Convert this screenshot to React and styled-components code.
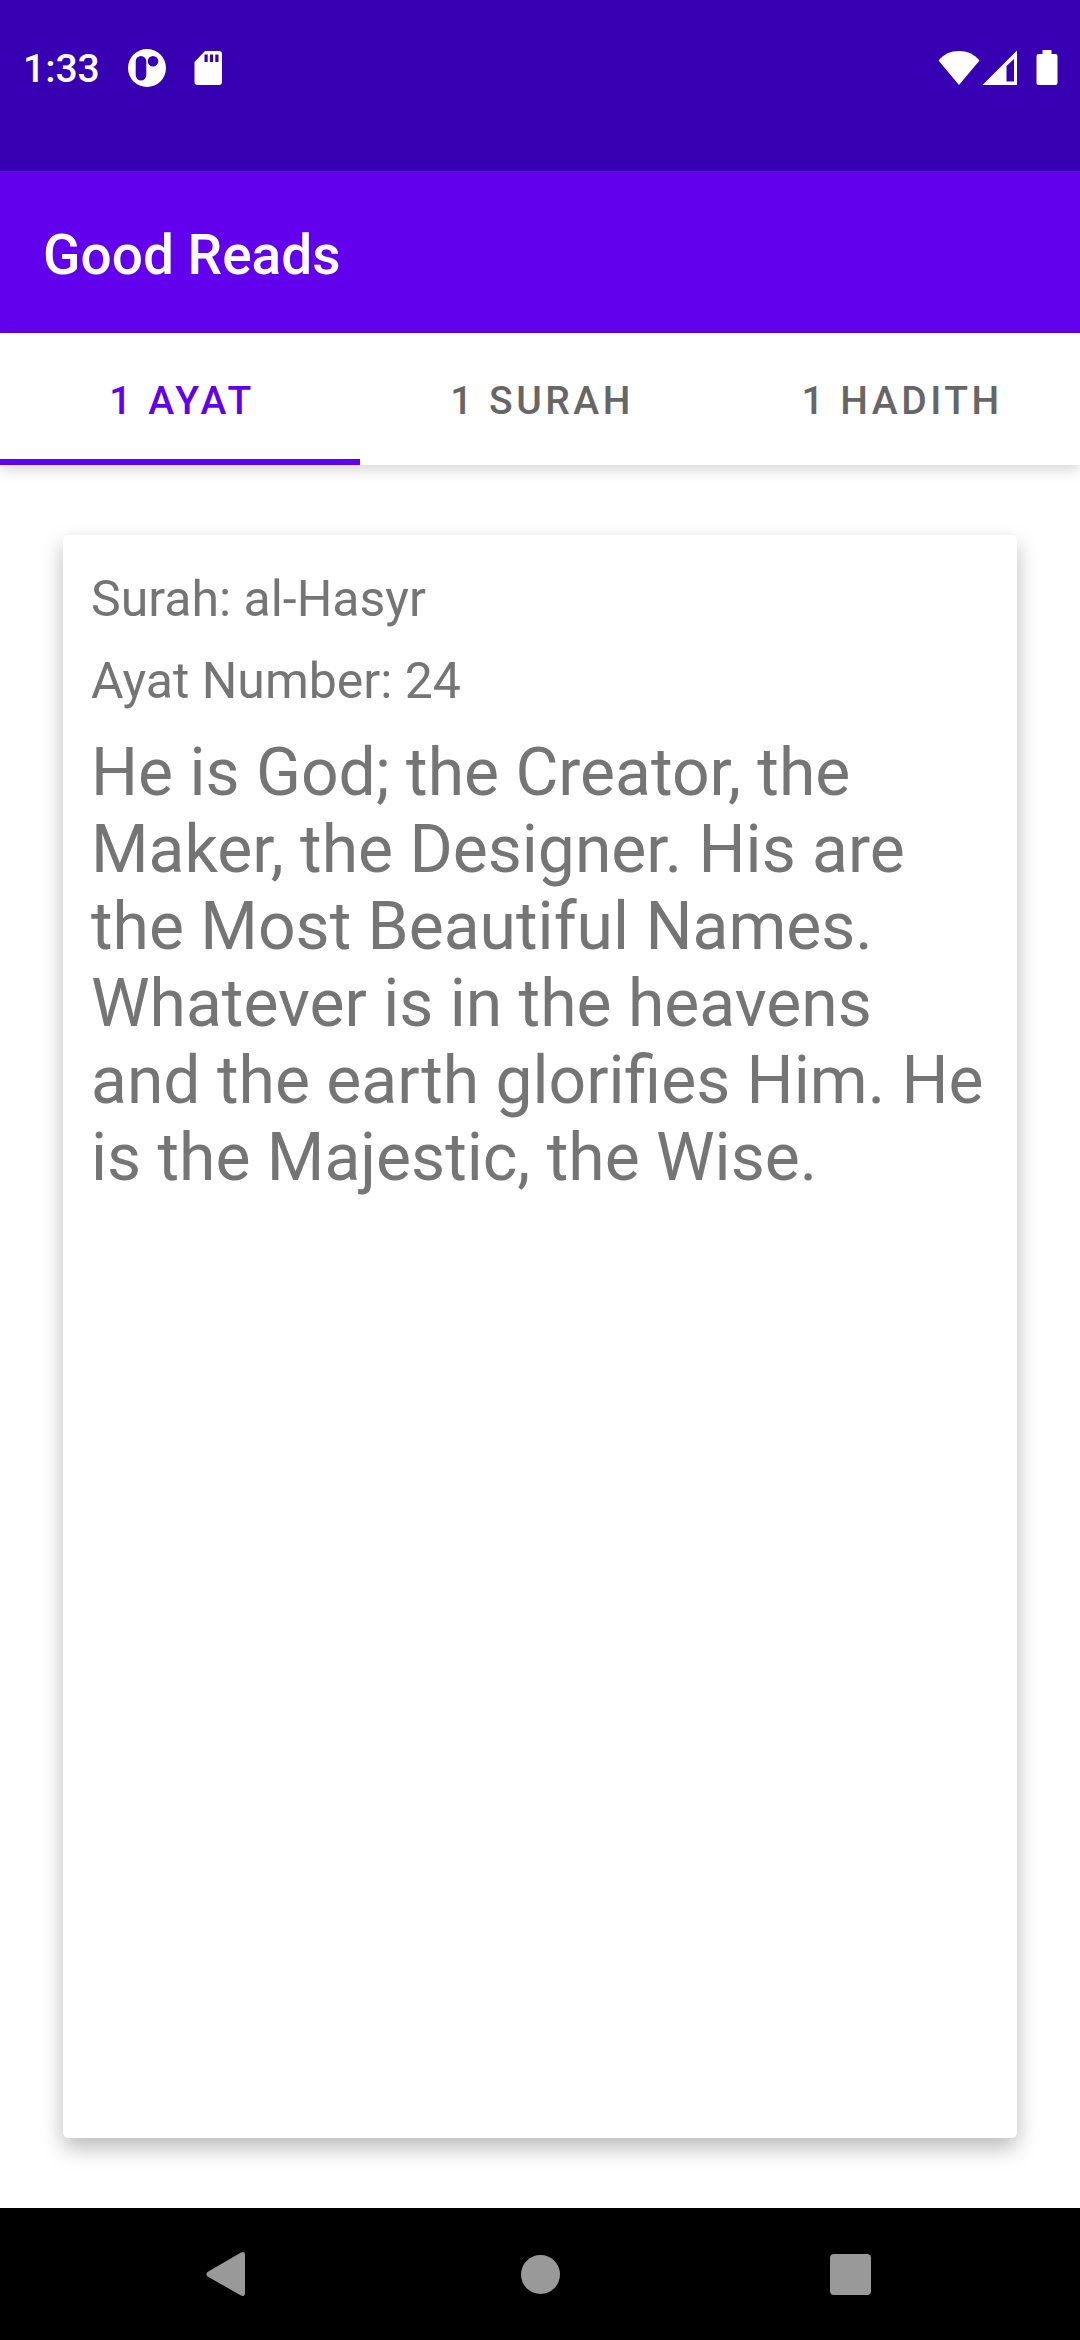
import React, { useState } from "react";
import styled, { createGlobalStyle } from "styled-components";

const tabs = [
  {
    label: "1 Ayat",
    source: "Surah: al-Hasyr",
    number: "Ayat Number: 24",
    text: "He is God; the Creator, the Maker, the Designer. His are the Most Beautiful Names. Whatever is in the heavens and the earth glorifies Him. He is the Majestic, the Wise.",
  },
  { label: "1 Surah" },
  { label: "1 Hadith" },
];

const StatusBar = () => (
  <StatusWrapper>
    <Time>1:33</Time>
    <Icon width="38" height="38" viewBox="0 0 38 38">
      <path
        fillRule="evenodd"
        d="M19 0a19 19 0 1 1 0 38a19 19 0 1 1 0-38zM13 7a5.3 5.3 0 0 0-5.3 5.3v14a5.3 5.3 0 0 0 10.6 0v-14A5.3 5.3 0 0 0 13 7zM25 7a5.3 5.3 0 1 0 0 10.6a5.3 5.3 0 1 0 0-10.6z"
      />
    </Icon>
    <Icon width="28" height="36" viewBox="0 0 28 36">
      <path
        fillRule="evenodd"
        d="M11 1H25a3 3 0 0 1 3 3V32a3 3 0 0 1-3 3H3.500a3 3 0 0 1-3-3V12zM10.500 4.500v7.500h3.200v-7.500zM15.900 4.500v7.500h3.200v-7.500zM21.300 4.500v7.500h3.200v-7.500z"
      />
    </Icon>
    <Signals>
      <Icon width="42" height="36" viewBox="0 0 42 36">
        <path d="M21 35L0.500 10.500C6 4 13 1 21 1S36 4 41.500 10.500z" />
      </Icon>
      <Icon width="36" height="36" viewBox="0 0 36 36">
        <path fillRule="evenodd" d="M0.500 35L35 0.500V35zM24.500 16V31.500H32V9z" />
      </Icon>
      <Battery width="22" height="36" viewBox="0 0 22 36">
        <path d="M6.500 0h9v4H19.500a2 2 0 0 1 2 2V33a2 2 0 0 1-2 2H2.500a2 2 0 0 1-2-2V6a2 2 0 0 1 2-2h4z" />
      </Battery>
    </Signals>
  </StatusWrapper>
);

const NavBar = () => (
  <NavWrapper>
    <NavButton aria-label="Back">
      <svg width="60" height="60" viewBox="0 0 60 60">
        <path d="M9.500 28L43 8.500Q47 7 47 11V49Q47 53 43 51.500L9.500 32.500Q7.500 30.200 9.500 28z" />
      </svg>
    </NavButton>
    <NavButton aria-label="Home">
      <svg width="60" height="60" viewBox="0 0 60 60">
        <circle cx="30.500" cy="30.500" r="19.500" />
      </svg>
    </NavButton>
    <NavButton aria-label="Overview">
      <svg width="60" height="60" viewBox="0 0 60 60">
        <rect x="8" y="10" width="41" height="41" rx="4" />
      </svg>
    </NavButton>
  </NavWrapper>
);

const App = () => {
  const [active, setActive] = useState(0);
  const { source, number, text } = tabs[active];

  return (
    <Page>
      <GlobalStyle />
      <StatusBar />
      <AppBar>
        <Title>Good Reads</Title>
      </AppBar>
      <TabBar role="tablist">
        {tabs.map((tab, index) => (
          <Tab
            key={tab.label}
            role="tab"
            aria-selected={index === active}
            $active={index === active}
            onClick={() => setActive(index)}
          >
            {tab.label}
          </Tab>
        ))}
      </TabBar>
      <Content>
        <Card>
          <Detail>{source}</Detail>
          <Detail>{number}</Detail>
          <Verse>{text}</Verse>
        </Card>
      </Content>
      <NavBar />
    </Page>
  );
};

export default App;

const GlobalStyle = createGlobalStyle`
  * {
    box-sizing: border-box;
  }

  body {
    margin: 0;
    background: #ffffff;
    font-family: Roboto, sans-serif;
  }

  p, h1 {
    margin: 0;
  }

  button {
    border: none;
    background: none;
    font-family: inherit;
    cursor: pointer;
  }
`;

const Page = styled.div`
  display: flex;
  flex-direction: column;
  min-height: 100vh;
`;

const StatusWrapper = styled.div`
  display: flex;
  align-items: center;
  gap: 28px;
  height: 171px;
  padding: 0 22px 36px 23px;
  background: #3700b3;
  color: #ffffff;
`;

const Time = styled.span`
  padding-top: 3px;
  font-size: 39px;
  font-weight: 500;
  line-height: 46px;
`;

const Icon = styled.svg`
  flex: none;
  fill: currentColor;
`;

const Signals = styled.div`
  display: flex;
  align-items: center;
  gap: 2px;
  margin-left: auto;
`;

const Battery = styled(Icon)`
  margin-left: 16px;
`;

const AppBar = styled.header`
  display: flex;
  align-items: center;
  height: 162px;
  padding: 6px 43px 0;
  background: #6200ee;
  color: #ffffff;
`;

const Title = styled.h1`
  font-size: 55px;
  font-weight: 500;
  line-height: 64px;
`;

const TabBar = styled.div`
  position: relative;
  display: grid;
  grid-template-columns: repeat(3, 1fr);
  height: 132px;
  background: #ffffff;
  box-shadow: 0 4px 14px rgba(0, 0, 0, 0.18);
`;

const Tab = styled.button`
  padding: 9px 0 0 4px;
  border-bottom: 6px solid ${({ $active }) => ($active ? "#6200ee" : "transparent")};
  color: ${({ $active }) => ($active ? "#6200ee" : "#666666")};
  font-size: 39px;
  font-weight: 500;
  letter-spacing: 0.09em;
  text-transform: uppercase;
`;

const Content = styled.main`
  display: flex;
  flex: 1;
  padding: 70px 63px;
`;

const Card = styled.article`
  display: flex;
  flex: 1;
  flex-direction: column;
  gap: 23px;
  padding: 35px 28px;
  border-radius: 5px;
  background: #ffffff;
  box-shadow: 0 10px 22px rgba(0, 0, 0, 0.27);
  color: #757575;
`;

const Detail = styled.p`
  font-size: 50px;
  line-height: 59px;
`;

const Verse = styled.p`
  font-size: 66px;
  line-height: 77px;
`;

const NavWrapper = styled.nav`
  display: grid;
  grid-template-columns: repeat(3, 1fr);
  height: 132px;
  padding: 0 72px;
  background: #000000;
`;

const NavButton = styled.button`
  display: flex;
  align-items: center;
  justify-content: center;
  padding: 0;
  fill: #999999;
`;
